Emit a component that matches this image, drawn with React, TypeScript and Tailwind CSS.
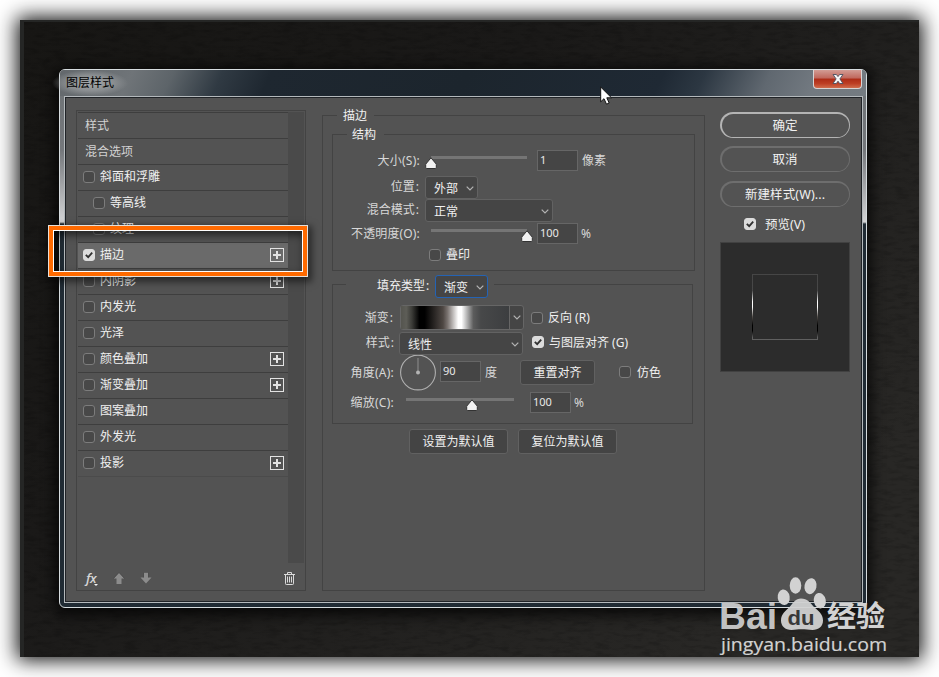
import type { ReactNode } from "react";
import clsx from "clsx";

type Effect = {
  name: string;
  indent?: boolean;
  checked?: boolean;
  add?: boolean;
};

const effects: Effect[] = [
  { name: "斜面和浮雕" },
  { name: "等高线", indent: true },
  { name: "纹理", indent: true },
  { name: "描边", checked: true, add: true },
  { name: "内阴影", add: true },
  { name: "内发光" },
  { name: "光泽" },
  { name: "颜色叠加", add: true },
  { name: "渐变叠加", add: true },
  { name: "图案叠加" },
  { name: "外发光" },
  { name: "投影", add: true },
];

const Checkbox = ({ checked }: { checked?: boolean }) => (
  <span
    className={clsx(
      "flex h-3 w-3 shrink-0 items-center justify-center rounded-[3px] border",
      checked ? "border-[#dcdcdc] bg-[#dcdcdc]" : "border-[#7c7c7c] bg-[#484848]"
    )}
  >
    {checked && (
      <svg width="8" height="8" viewBox="0 0 8 8" fill="none" stroke="#303030" strokeWidth="1.8">
        <path d="M0.8 3.8 3.2 6.2 7.2 1.6" />
      </svg>
    )}
  </span>
);

const AddIcon = () => (
  <svg width="14" height="14" viewBox="0 0 14 14" fill="none" stroke="#e2e2e2" className="shrink-0">
    <rect x="0.5" y="0.5" width="13" height="13" />
    <path d="M7 3v8M3 7h8" strokeWidth="2" />
  </svg>
);

const Chevron = () => (
  <svg width="8" height="5" viewBox="0 0 8 5" fill="none" stroke="#b4b4b4" strokeWidth="1.2" className="shrink-0">
    <path d="M0.7 0.7 4 4 7.3 0.7" />
  </svg>
);

const Select = ({ value, className }: { value: string; className?: string }) => (
  <div
    className={clsx(
      "flex h-[23px] shrink-0 items-center justify-between rounded-[3px] border bg-[#454545] pr-[3px] pl-2 text-[#f0f0f0]",
      className
    )}
  >
    <span className="translate-y-px">{value}</span>
    <span className="mt-px">
      <Chevron />
    </span>
  </div>
);

const NumberField = ({ value, className }: { value: string; className?: string }) => (
  <div
    className={clsx(
      "flex h-[21px] w-[41px] shrink-0 items-center border border-[#666] bg-[#454545] pb-px pl-[2px] text-[11px] text-[#e8e8e8]",
      className
    )}
  >
    {value}
  </div>
);

const Slider = ({ position, className }: { position: number; className?: string }) => (
  <div className={clsx("relative h-[3px] shrink-0 bg-[#757575]", className)}>
    <svg
      width="14"
      height="13"
      viewBox="0 0 14 13"
      className="absolute top-[1px] -translate-x-1/2"
      style={{ left: `${position}%` }}
    >
      <path
        d="M7 0.8 12.3 7.2v3.3q0 1-1 1H2.7q-1 0-1-1V7.2Z"
        fill="#f2f2f2"
        stroke="#333"
        strokeWidth="1"
      />
    </svg>
  </div>
);

const Label = ({ children, className }: { children: ReactNode; className?: string }) => (
  <span className={clsx("shrink-0 text-right whitespace-nowrap text-[#d8d8d8]", className)}>{children}</span>
);

const Colon = () => <span className="ml-px">:</span>;

const DefaultButton = ({ children, className }: { children: ReactNode; className?: string }) => (
  <button
    className={clsx(
      "flex h-[25px] shrink-0 items-center justify-center rounded-[3px] border border-[#616161] bg-[#444] pt-px text-[#f0f0f0]",
      className
    )}
  >
    {children}
  </button>
);

const PillButton = ({ children, primary }: { children: ReactNode; primary?: boolean }) => (
  <button className={clsx("h-[26px] w-[130px] rounded-full p-[1.5px]", primary ? "bg-[#b4b4b4]" : "bg-[#6e6e6e]")}>
    <span className="flex h-full items-center justify-center rounded-full bg-[#535353] pt-px text-[12.5px] text-[#f0f0f0]">
      {children}
    </span>
  </button>
);

const StyleList = () => (
  <div className="mt-3 ml-[10px] flex h-[481px] w-[230px] flex-col border border-[#434343] pt-px pl-px">
    <div className="flex h-[451px]">
      <div className="w-[210px] text-[#f0f0f0]">
        <div className="flex h-[26px] items-center border-t border-[#3e3e3e] pl-[7px] text-[#d2d2d2]">样式</div>
        <div className="flex h-[26px] items-center border-t border-[#3e3e3e] pl-[7px] text-[#d2d2d2]">混合选项</div>
        {effects.map((effect) => (
          <div
            key={effect.name}
            className={clsx(
              "flex h-[26px] items-center border-t border-[#3e3e3e] pr-1 pb-px",
              effect.indent ? "pl-[15px]" : "pl-[5px]",
              effect.checked && "bg-[#6a6a6a]"
            )}
          >
            <Checkbox checked={effect.checked} />
            <span className="ml-[5px] flex-1">{effect.name}</span>
            {effect.add && <AddIcon />}
          </div>
        ))}
        <div className="border-t border-[#4b4b4b]" />
      </div>
      <div className="w-4 bg-[#4a4a4a]" />
    </div>
    <div className="flex flex-1 items-center pt-[3px] pr-[10px] pl-2">
      <div className="flex h-4 w-[15px] items-end">
        <span className="font-['Open_Sans',sans-serif] text-[13px] font-semibold tracking-[-0.5px] text-[#d6d6d6] italic">fx</span>
        <svg width="4" height="2" viewBox="0 0 4 2" className="-ml-[2px] shrink-0" fill="#f4f4f4">
          <path d="M0 0h4L2 2Z" />
        </svg>
      </div>
      <svg width="12" height="12" viewBox="0 0 12 12" className="ml-[12px]" fill="#8c8c8c">
        <path d="M6 0.5 11.5 6.5H8.5V12H3.5V6.5H0.5Z" />
        <path d="M0.5 6.5 6 0.5l5.5 6" fill="none" stroke="#3f3f3f" strokeWidth="0.7" />
      </svg>
      <svg width="12" height="12" viewBox="0 0 12 12" className="ml-[15px]" fill="#8c8c8c">
        <path d="M3.5 0h5v5.5h3L6 11.5.5 5.5h3Z" />
        <path d="M3.5 5.5V0.4h5V5.5" fill="none" stroke="#3f3f3f" strokeWidth="0.7" />
      </svg>
      <svg width="11" height="13" viewBox="0 0 11 13" className="ml-auto" fill="none" stroke="#dadada">
        <path d="M0 2.5h11M3.5 2.5v-2h4v2M1.5 2.5v9.2q0 .8.8.8h6.4q.8 0 .8-.8V2.5" />
        <path d="M3.5 4.500v6M5.500 4.500v6M7.500 4.500v6" />
      </svg>
    </div>
  </div>
);

const StructureGroup = () => (
  <div className="mt-[10px] ml-[9px] h-[137px] w-[363px] border border-[#434343]">
    <div className="-mt-[9px] ml-[14px] h-4 w-[37px] bg-[#535353] pl-[5px] leading-[18px] text-[#f0f0f0]">结构</div>
    <div className="mt-2 flex h-[21px] items-center">
      <Label className="w-[87px] pt-px tracking-[0.25px]">大小(S):</Label>
      <Slider position={0} className="ml-[11px] -mt-[6px] w-24" />
      <NumberField value="1" className="ml-[10px]" />
      <Label className="ml-1 pt-px">像素</Label>
    </div>
    <div className="mt-[5px] flex h-[23px] items-center">
      <Label className="-mt-[2px] w-[86px]">
        位置
        <Colon />
      </Label>
      <Select value="外部" className="ml-[6px] w-[53px] border-[#626262]" />
    </div>
    <div className="flex h-[23px] items-center">
      <Label className="-mt-[2px] w-[86px]">
        混合模式
        <Colon />
      </Label>
      <Select value="正常" className="ml-[6px] w-[128px] border-[#626262]" />
    </div>
    <div className="mt-px flex h-[21px] items-center">
      <Label className="w-[87px] tracking-[0.15px]">不透明度(O):</Label>
      <Slider position={100} className="ml-[11px] -mt-[6px] w-24" />
      <NumberField value="100" className="ml-[10px]" />
      <Label className="ml-[3px]">%</Label>
    </div>
    <div className="mt-[3px] ml-24 flex h-4 items-center text-[#f0f0f0]">
      <Checkbox />
      <span className="ml-[5px]">叠印</span>
    </div>
  </div>
);

const FillGroup = () => (
  <div className="mt-[13px] ml-[9px] h-[140px] w-[361px] border border-[#434343]">
    <div className="-mt-[10px] ml-[13px] flex h-[23px] w-[148px] items-center bg-[#535353]">
      <span className="-mt-[2px] w-[89px] pl-[31px] whitespace-nowrap text-[#f0f0f0]">
        填充类型
        <Colon />
      </span>
      <Select value="渐变" className="w-[53px] border-[#2463b4]" />
    </div>
    <div className="mt-[7px] flex h-[25px] items-center">
      <Label className="w-[60px] pt-px">
        渐变
        <Colon />
      </Label>
      <div className="ml-[7px] flex h-[25px] w-[124px] rounded-[3px] border border-[#666] bg-[#454545]">
        <div className="h-[23px] w-[108px] bg-[linear-gradient(90deg,#55554f_0%,#5d5d57_5%,#3c3c38_10%,#000_17%,#000_22%,#4f4844_39%,#78716e_43%,#fff_53%,#fff_56%,#5c5c5c_67%,#474849_74%,#3c3e40_100%)]" />
        <div className="flex flex-1 items-center justify-center border-l border-[#666]">
          <Chevron />
        </div>
      </div>
      <div className="ml-[7px] flex items-center text-[#f0f0f0]">
        <Checkbox />
        <span className="ml-[5px] pt-px">反向 (R)</span>
      </div>
    </div>
    <div className="mt-[2px] flex h-[23px] items-center">
      <Label className="-mt-[2px] w-[61px]">
        样式
        <Colon />
      </Label>
      <Select value="线性" className="ml-[5px] w-[124px] border-[#626262]" />
      <div className="-mt-[3px] ml-[9px] flex items-center text-[#f0f0f0]">
        <Checkbox checked />
        <span className="ml-[5px] pt-px">与图层对齐 (G)</span>
      </div>
    </div>
    <div className="flex h-[35px] items-center">
      <Label className="w-[61px] tracking-[0.25px]">角度(A):</Label>
      <svg width="36" height="36" viewBox="0 0 36 36" className="ml-[6px] shrink-0">
        <circle cx="18" cy="17.5" r="17.4" fill="none" stroke="#b0b0b0" strokeWidth="1.1" />
        <path d="M18 3v15" stroke="#858585" strokeWidth="1.2" />
        <circle cx="18" cy="17.5" r="2" fill="#b4b4b4" />
      </svg>
      <NumberField value="90" className="ml-1 -mt-[2px]" />
      <Label className="ml-1">度</Label>
      <DefaultButton className="-mt-px ml-[23px] w-[75px]">重置对齐</DefaultButton>
      <div className="-mt-px ml-[24px] flex items-center text-[#f0f0f0]">
        <Checkbox />
        <span className="ml-[6px] pt-px">仿色</span>
      </div>
    </div>
    <div className="mt-[2px] flex h-[21px] items-center">
      <Label className="w-[61px] pt-px tracking-[0.25px]">缩放(C):</Label>
      <Slider position={61} className="-mt-[6px] ml-3 w-[108px]" />
      <NumberField value="100" className="ml-4" />
      <Label className="ml-[3px] pt-px">%</Label>
    </div>
  </div>
);

const StrokeSettings = () => (
  <div className="mt-[17px] ml-4 h-[476px] w-[383px] border border-[#434343]">
    <div className="-mt-[8px] ml-[14px] h-4 w-[37px] bg-[#535353] pl-[6px] leading-4 text-[#f0f0f0]">描边</div>
    <StructureGroup />
    <FillGroup />
    <div className="mt-[5px] ml-[86px] flex gap-[10px]">
      <DefaultButton className="w-[99px]">设置为默认值</DefaultButton>
      <DefaultButton className="w-[99px]">复位为默认值</DefaultButton>
    </div>
  </div>
);

const Actions = () => (
  <div className="mt-[14px] ml-[15px] flex w-[130px] flex-col">
    <PillButton primary>确定</PillButton>
    <div className="mt-2 flex">
      <PillButton>取消</PillButton>
    </div>
    <div className="mt-[9px] flex">
      <PillButton>
        <span className="tracking-[0.1px]">新建样式(W)...</span>
      </PillButton>
    </div>
    <div className="mt-2 ml-6 flex h-[18px] items-center text-[12.5px] text-[#f0f0f0]">
      <Checkbox checked />
      <span className="ml-[9px] pt-px">预览(V)</span>
    </div>
    <div className="mt-[9px] flex h-[130px] items-center justify-center border border-[#414141] bg-[#2c2c2c]">
      <div className="h-[66px] w-[66px] bg-[linear-gradient(180deg,#464646_0%,#484848_25%,#fff_42%,#fff_50%,#504c48_65%,#000_78%,#000_86%,#606060_96%)] p-px">
        <div className="h-full bg-[#2c2c2c]" />
      </div>
    </div>
  </div>
);

const TitleBar = () => (
  <div className="flex h-[26px] justify-between rounded-t-[4px] bg-[linear-gradient(115deg,#63686c_0%,#6f7478_9%,#5d6469_14%,#303a43_20%,#1e2730_26%,#1c252d_50%,#1f2934_74%,#2c3742_79%,#606870_87%,#727980_93%,#747b81_100%)]">
    <span className="-ml-[8px] flex h-[26px] items-center bg-[radial-gradient(closest-side,#b4b7b9cc,#a0a3a599_60%,transparent)] px-[14px] text-black">
      图层样式
    </span>
    <button className="mr-[4px] flex h-[19px] w-[49px] items-center justify-center rounded-b-[4px] border border-t-0 border-[#d8d4d4] bg-[linear-gradient(180deg,#d29c94_0%,#c0675c_45%,#ad2c17_50%,#bd3e24_75%,#d06c4c_100%)]">
      <svg width="12" height="10" viewBox="0 0 12 10">
        <path d="M1 .5h3.4L6 2.6 7.6.5H11L7.9 4.9 11 9.5H7.6L6 7.2 4.4 9.5H1L4.1 4.9Z" fill="#f6f6f6" stroke="#4a4f60" strokeWidth="0.9" />
      </svg>
    </button>
  </div>
);

const Watermark = () => (
  <svg width="180" height="95" viewBox="715 570 180 95" className="absolute top-[570px] left-[715px]" fill="#d2d2d2">
    <text x="719" y="629" fontSize="37" fontWeight="700" fontFamily="Liberation Sans, sans-serif" textLength="58" lengthAdjust="spacingAndGlyphs" fillOpacity="0.93">
      Bai
    </text>
    <ellipse cx="783.7" cy="597.3" rx="6" ry="7.8" transform="rotate(-8 783.7 597.3)" />
    <ellipse cx="795.5" cy="585.5" rx="5.8" ry="8.3" />
    <ellipse cx="810.5" cy="586.2" rx="6" ry="8" transform="rotate(12 810.5 586.2)" />
    <ellipse cx="819.8" cy="600.7" rx="6" ry="7.8" transform="rotate(-12 819.8 600.7)" />
    <path d="M801 598.500c6.500 0 9 4 12.500 8 4.500 4.500 9.500 7 9.500 14 0 6-4.500 9.500-10.500 9.500-4 0-7-.7-11-.7s-6 .7-10 .7c-6.500 0-10.500-4-10.500-9.500 0-7 5-9.500 9-14 3.500-4 5.500-8 11-8Z" fillOpacity="0.95" />
    <text x="787.500" y="624.500" fontSize="20" fontWeight="700" fontFamily="Liberation Sans, sans-serif" textLength="27" lengthAdjust="spacingAndGlyphs" fill="#383838">
      du
    </text>
    <text x="827" y="627" fontSize="29" fontWeight="700" fontFamily="Noto Sans CJK SC, sans-serif" textLength="58" lengthAdjust="spacingAndGlyphs">
      经验
    </text>
    <text x="721" y="651" fontSize="19" fontFamily="Open Sans, sans-serif" textLength="166" lengthAdjust="spacingAndGlyphs" stroke="#d2d2d2" strokeWidth="0.2">
      jingyan.baidu.com
    </text>
  </svg>
);

// Fine, horizontally stretched grain over the dark canvas
const Grain = () => (
  <svg className="absolute inset-0 h-full w-full opacity-15">
    <filter id="grain">
      <feTurbulence type="fractalNoise" baseFrequency="0.07 0.25" numOctaves="4" seed="4" />
      <feColorMatrix values="0 0 0 0 0  0 0 0 0 0  0 0 0 0 0  3 0 0 0 -1.4" />
    </filter>
    <rect width="100%" height="100%" filter="url(#grain)" />
  </svg>
);

const App = () => (
  <div className="relative h-[677px] w-[939px] overflow-hidden bg-white p-5 font-['Noto_Sans','Noto_Sans_CJK_SC',sans-serif] text-[12px] leading-4">
    <div className="relative h-[637px] w-[899px] border-t-2 border-l-4 border-[#252625] bg-[linear-gradient(135deg,#171614,#1a1918_35%,#282725_85%)] shadow-[0_0_19px_3px_rgba(0,0,0,0.95)]">
      <Grain />
      <div className="relative mt-[47px] ml-[35px] h-[539px] w-[808px] rounded-[6px] border border-[#d6dcdf] bg-[linear-gradient(180deg,#6d7275_0px,#74777b_80px,#d0d1d3_150px,#d4d4d4_152px,#202b34_154px,#202b34_100%)] shadow-[0_3px_14px_4px_rgba(0,0,0,0.75)]">
        <TitleBar />
        <div className="ml-1 h-[507px] w-[799px] border border-[#b4b9bc]">
          <div className="flex h-full border border-[#202327] bg-[#535353]">
            <StyleList />
            <StrokeSettings />
            <Actions />
          </div>
        </div>
      </div>
    </div>

    {/* highlight around the active effect */}
    <div className="absolute top-[225px] left-[48px] h-[52px] w-[260px] border border-[#e6e0da] shadow-[2px_3px_7px_2px_rgba(0,0,0,0.5)]">
      <div className="h-full border-4 border-[#ff6a00]">
        <div className="h-full border border-white shadow-[inset_2px_4px_8px_rgba(0,0,0,0.6)]" />
      </div>
    </div>

    <svg width="14" height="20" viewBox="0 0 14 20" className="absolute top-[86px] left-[600px]">
      <path d="M.7 1v14.8l3.3-3.1 2.5 5.500 2.700-1.200-2.400-5.200h4.700Z" fill="#fff" stroke="#111" strokeWidth="1" />
    </svg>

    <Watermark />
  </div>
);

export default App;
